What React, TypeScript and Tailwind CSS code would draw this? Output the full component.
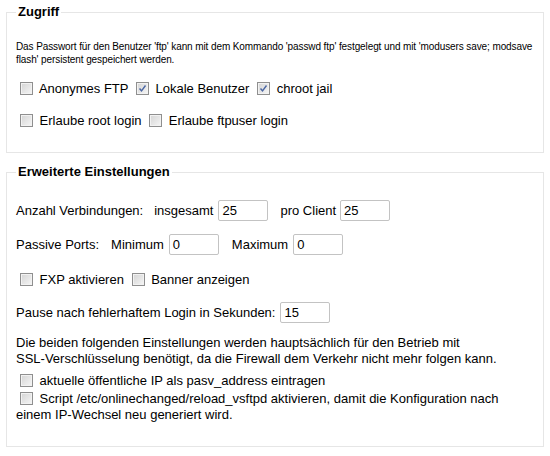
import React from 'react';

function Box({ checked = false }: { checked?: boolean }) {
  return (
    <span className="relative inline-block w-[13px] h-[13px] ml-[4px] mr-[3px] align-[-2px] border border-[#8f8f8f] bg-[linear-gradient(135deg,#d4d4d4,#f6f6f6)] shadow-[inset_0_0_0_1px_#f2f2f2]">
      {checked && (
        <svg viewBox="0 0 11 11" className="absolute left-0 top-0 w-[11px] h-[11px]">
          <path d="M2.5 5.5 L4.5 7.8 L8.5 2.5" fill="none" stroke="#4a66a3" strokeWidth="1.4" />
        </svg>
      )}
    </span>
  );
}

function Field({ value, className = '' }: { value: string; className?: string }) {
  return (
    <span className={`inline-flex items-center w-[50px] h-[21px] pl-[3px] border border-[#c3c3c3] rounded-[2px] bg-white text-[13px] ${className}`}>
      {value}
    </span>
  );
}

export default function App() {
  return (
    <div className="w-[550px] h-[456px] bg-white text-black pt-[4px] font-['Liberation_Sans',Arial,sans-serif] text-[13px] leading-[16px]">
      {/* Zugriff */}
      <fieldset className="mx-[6px] border border-[#e6e6e6] pl-[9px] pr-[9px] pb-[23px]">
        <legend className="px-[2px] font-bold leading-[16px]">Zugriff</legend>
        <p className="mt-[20px] text-[10px] leading-[13px] tracking-[-0.1px]">
          <span className="whitespace-nowrap">Das Passwort für den Benutzer 'ftp' kann mit dem Kommando 'passwd ftp' festgelegt und mit 'modusers save; modsave</span>
          <br />
          flash' persistent gespeichert werden.
        </p>
        <div className="mt-[15px]">
          <Box /> Anonymes FTP <Box checked /> Lokale Benutzer <Box checked /> chroot jail
        </div>
        <div className="mt-[16px]">
          <Box /> Erlaube root login <Box /> Erlaube ftpuser login
        </div>
      </fieldset>

      {/* Erweiterte Einstellungen */}
      <fieldset className="mx-[6px] mt-[11px] border border-[#e6e6e6] pl-[9px] pr-[9px] pb-[23px]">
        <legend className="px-[2px] font-bold leading-[16px]">Erweiterte Einstellungen</legend>
        <div className="mt-[20px] flex items-center">
          <span>Anzahl Verbindungen:</span>
          <span className="ml-[11px]">insgesamt</span>
          <Field value="25" className="ml-[5px]" />
          <span className="ml-[12px]">pro Client</span>
          <Field value="25" className="ml-[4px]" />
        </div>
        <div className="mt-[13px] flex items-center">
          <span>Passive Ports:</span>
          <span className="ml-[12px]">Minimum</span>
          <Field value="0" className="ml-[5px]" />
          <span className="ml-[13px]">Maximum</span>
          <Field value="0" className="ml-[5px]" />
        </div>
        <div className="mt-[17px]">
          <Box /> FXP aktivieren <Box /> Banner anzeigen
        </div>
        <div className="mt-[14px] flex items-center">
          <span>Pause nach fehlerhaftem Login in Sekunden:</span>
          <Field value="15" className="ml-[5px]" />
        </div>
        <p className="mt-[12px]">
          Die beiden folgenden Einstellungen werden hauptsächlich für den Betrieb mit{' '}
          <span className="whitespace-nowrap">SSL-Verschlüsselung</span> benötigt, da die Firewall dem Verkehr nicht mehr folgen kann.
        </p>
        <div className="mt-[6px]">
          <Box /> aktuelle öffentliche IP als pasv_address eintragen
        </div>
        <div className="mt-[2px]">
          <Box /> Script /etc/onlinechanged/reload_vsftpd aktivieren, damit die Konfiguration nach einem IP-Wechsel neu generiert wird.
        </div>
      </fieldset>
    </div>
  );
}
